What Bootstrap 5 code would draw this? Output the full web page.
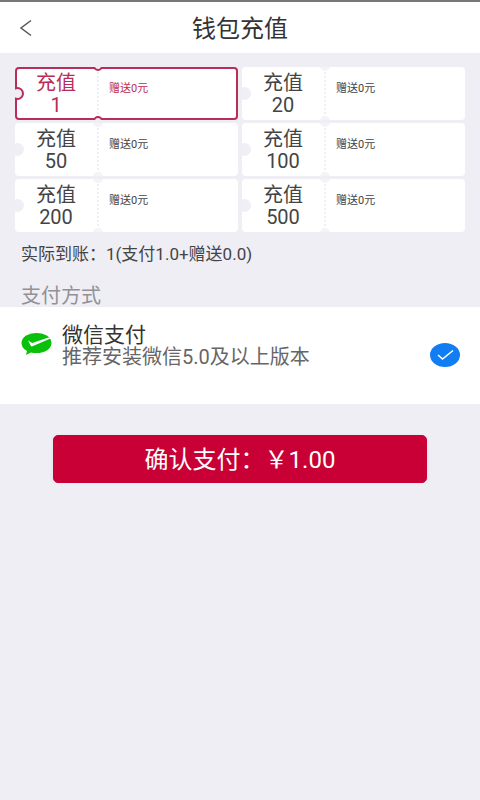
<!DOCTYPE html>
<html lang="zh-CN">
<head>
<meta charset="utf-8">
<meta name="viewport" content="width=device-width, initial-scale=1">
<title>钱包充值</title>
<link rel="stylesheet" href="https://cdn.jsdelivr.net/npm/bootstrap@5.3.0/dist/css/bootstrap.min.css">
<style>
:root { --page: #efeef5; --brand: #c80036; --pick: #b92d58; }
body { background: var(--page); color: #444; font-family: Roboto, "Noto Sans CJK SC", sans-serif; }
.topbar { height: 53px; border-top: 2px solid #777; }
.topbar h1 { font-size: 24px; line-height: 28px; padding-top: 2px; color: #333; font-weight: 400; }
.back { left: 16px; width: 20px; height: 28px; }
.tickets { display: grid; grid-template-columns: 1fr 1fr; gap: 3px 4px; padding: 14px 15px 0; }
.ticket { height: 53px; background: #fff; border: 2px solid #fff; border-radius: 4px; cursor: pointer; }
.ticket::before { content: ""; position: absolute; left: -6px; top: 18px; width: 13px; height: 13px; border-radius: 50%; background: #f0eff6; clip-path: inset(0 0 0 4px); }
.amount { width: 78px; padding-top: 3px; font-size: 20px; line-height: 22px; }
.perf { width: 2px; margin-left: 2px; border-left: 2px dotted #f0eff5; }
.perf::before, .perf::after { content: ""; position: absolute; left: -6px; width: 10px; height: 10px; border-radius: 50%; background: #f4f3f8; }
.perf::before { top: -8px; clip-path: inset(6px 0 0 0); }
.perf::after { bottom: -8px; clip-path: inset(0 0 6px 0); }
.gift { font-size: 11px; line-height: 16px; padding: 12px 0 0 10px; }
.btn-check:checked + .ticket { border-color: var(--pick); color: var(--pick); }
.btn-check:checked + .ticket::before,
.btn-check:checked + .ticket .perf::before,
.btn-check:checked + .ticket .perf::after { border: 2px solid var(--pick); background: var(--page); }
.btn-check:focus-visible + .ticket { outline: 2px solid #0d7cf2; }
.total { font-size: 17px; line-height: 24px; padding: 10px 21px 0; }
.section-name { font-size: 20px; line-height: 22px; padding: 19px 21px 0; color: #929197; font-weight: 400; }
.method { min-height: 97px; padding: 17px 20px 0; cursor: pointer; }
.method-name { font-size: 21px; line-height: 22px; color: #333; }
.method-note { font-size: 20px; line-height: 22px; color: #666; }
.method-text { padding-left: 10px; }
.method-logo { margin-top: 7px; }
.choice { appearance: none; width: 30px; height: 24px; margin: 19px 0 0; border: 1px solid #bbb; border-radius: 50%; }
.choice:checked { border: 0; background: #117df3; }
.choice-box svg { left: 7px; top: 25px; pointer-events: none; }
.pay-area { padding: 31px 53px 0; }
.pay { height: 48px; font-size: 24px; line-height: 28px; border-radius: 5px; padding: 2px 0 0;
  --bs-btn-bg: var(--brand); --bs-btn-color: #fff; --bs-btn-border-color: var(--brand);
  --bs-btn-hover-bg: #b00030; --bs-btn-hover-color: #fff; --bs-btn-hover-border-color: #b00030;
  --bs-btn-active-bg: #a0002b; --bs-btn-active-color: #fff; }
</style>
</head>
<body>
<header class="topbar bg-white position-relative d-flex align-items-center justify-content-center">
  <button type="button" class="back btn border-0 p-0 position-absolute d-flex align-items-center justify-content-center" aria-label="返回">
    <svg width="14" height="18" viewBox="0 0 14 18" fill="none" stroke="#555" stroke-width="1.5"><path d="M12 1.500 2 9l10 7.500"/></svg>
  </button>
  <h1 class="m-0">钱包充值</h1>
</header>
<main>
  <form>
    <div class="tickets" role="radiogroup" aria-label="充值金额">
      <div><input class="btn-check" type="radio" name="amount" id="a1" checked><label class="ticket d-flex position-relative" for="a1"><span class="amount text-center"><span class="d-block">充值</span><span class="d-block">1</span></span><span class="perf position-relative"></span><span class="gift">赠送0元</span></label></div>
      <div><input class="btn-check" type="radio" name="amount" id="a20"><label class="ticket d-flex position-relative" for="a20"><span class="amount text-center"><span class="d-block">充值</span><span class="d-block">20</span></span><span class="perf position-relative"></span><span class="gift">赠送0元</span></label></div>
      <div><input class="btn-check" type="radio" name="amount" id="a50"><label class="ticket d-flex position-relative" for="a50"><span class="amount text-center"><span class="d-block">充值</span><span class="d-block">50</span></span><span class="perf position-relative"></span><span class="gift">赠送0元</span></label></div>
      <div><input class="btn-check" type="radio" name="amount" id="a100"><label class="ticket d-flex position-relative" for="a100"><span class="amount text-center"><span class="d-block">充值</span><span class="d-block">100</span></span><span class="perf position-relative"></span><span class="gift">赠送0元</span></label></div>
      <div><input class="btn-check" type="radio" name="amount" id="a200"><label class="ticket d-flex position-relative" for="a200"><span class="amount text-center"><span class="d-block">充值</span><span class="d-block">200</span></span><span class="perf position-relative"></span><span class="gift">赠送0元</span></label></div>
      <div><input class="btn-check" type="radio" name="amount" id="a500"><label class="ticket d-flex position-relative" for="a500"><span class="amount text-center"><span class="d-block">充值</span><span class="d-block">500</span></span><span class="perf position-relative"></span><span class="gift">赠送0元</span></label></div>
    </div>
    <p class="total m-0">实际到账：1(支付1.0+赠送0.0)</p>
    <h2 class="section-name m-0">支付方式</h2>
    <label class="method bg-white d-flex align-items-start" for="wechat">
      <svg class="method-logo flex-shrink-0" width="32" height="26" viewBox="0 0 32 26" aria-hidden="true"><path fill="#09c00b" d="M16.500 2C8 2 1.500 6.300 1.500 12c0 3.400 2.300 6.300 5.500 8l-1 4 5-2.500c1.700.4 3.500.6 5.500.6C25 22.100 31.500 17.800 31.500 12S25 2 16.500 2Z"/><path fill="#fff" d="m8 9.500 4.200 2.600L28.500 6.500 30.500 7.500l-18 7.800c-.7.300-1.300.1-1.700-.5Z"/></svg>
      <span class="method-text d-flex flex-column flex-grow-1">
        <span class="method-name">微信支付</span>
        <span class="method-note">推荐安装微信5.0及以上版本</span>
      </span>
      <span class="choice-box position-relative d-flex">
        <input class="choice" type="radio" name="method" id="wechat" checked>
        <svg class="position-absolute" width="17" height="12" viewBox="0 0 17 12" fill="none" stroke="#fff" stroke-width="1.600" aria-hidden="true"><path d="m1 6 4.500 4L16 1.500"/></svg>
      </span>
    </label>
    <div class="pay-area">
      <button type="button" class="pay btn w-100 shadow-sm">确认支付：￥1.00</button>
    </div>
  </form>
</main>
<script src="https://cdn.jsdelivr.net/npm/bootstrap@5.3.0/dist/js/bootstrap.bundle.min.js"></script>
</body>
</html>
